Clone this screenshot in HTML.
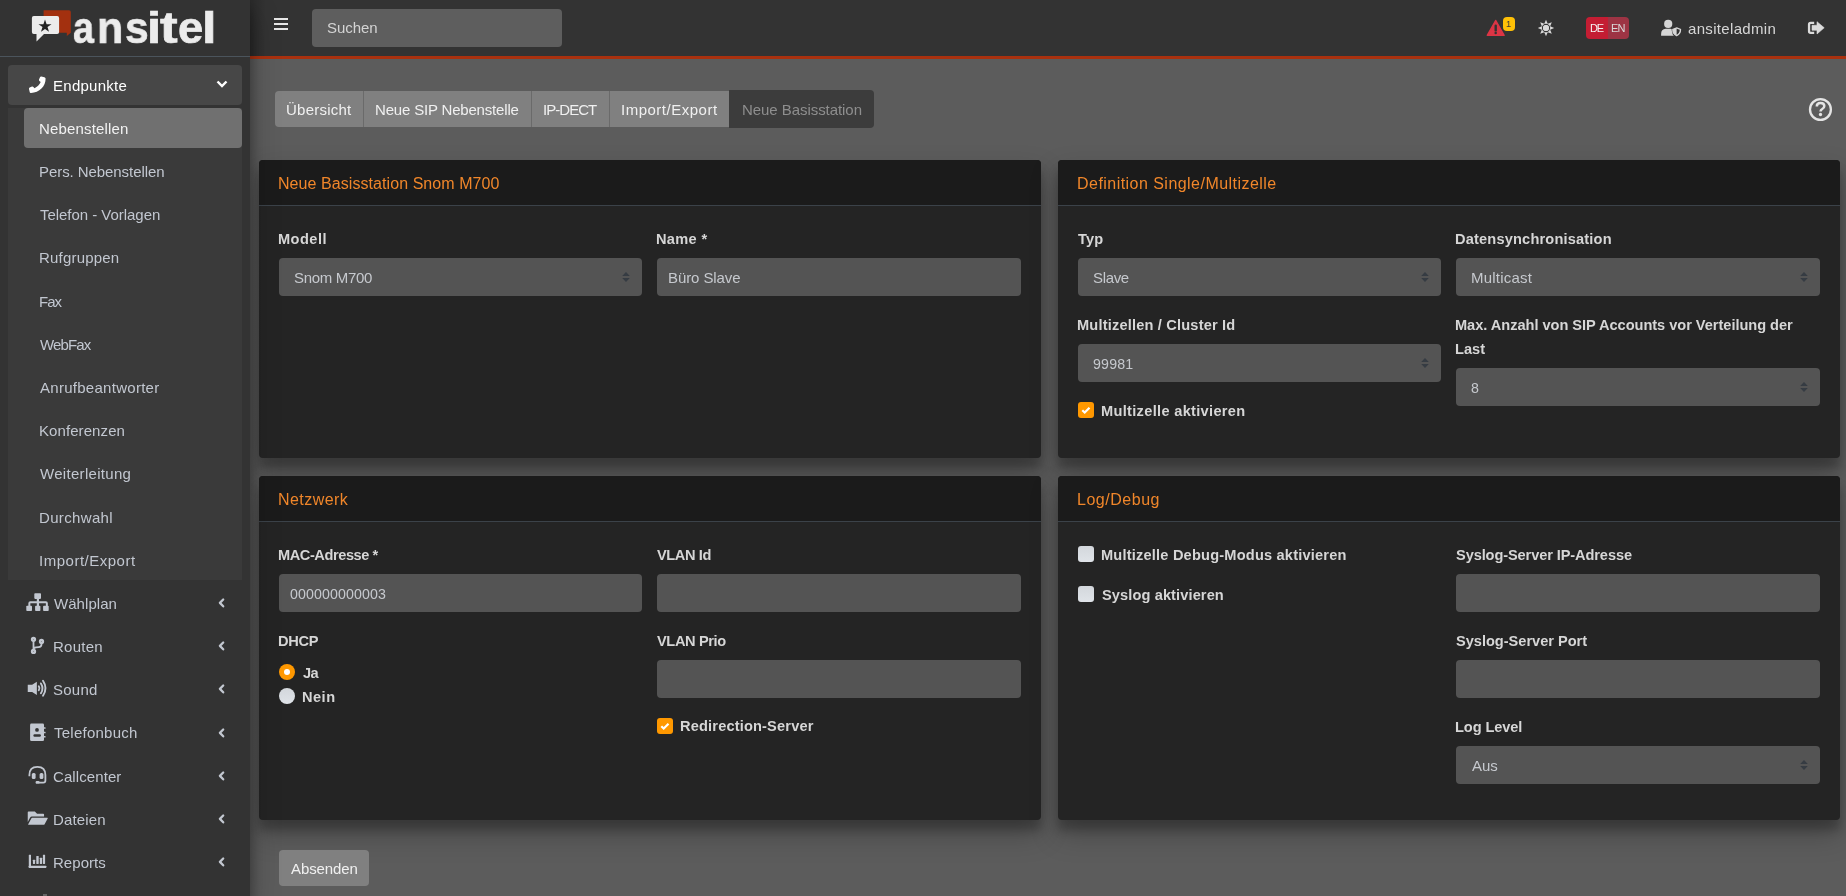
<!DOCTYPE html>
<html><head><meta charset="utf-8">
<style>
*{box-sizing:border-box;margin:0;padding:0}
html,body{width:1846px;height:896px;overflow:hidden;background:#5c5c5c;font-family:"Liberation Sans",sans-serif;position:relative}
.a{position:absolute}
.t{position:absolute;white-space:nowrap;line-height:24px;font-size:15px;will-change:transform}
svg{position:absolute;overflow:visible}
</style></head><body>
<div class="a" style="left:250px;top:59px;width:1596px;height:837px;background:#5c5c5c;"></div>
<div class="a" style="left:275px;top:91px;width:454px;height:36px;background:#808080;border-radius:4px 0 0 4px;"></div>
<div class="a" style="left:363px;top:91px;width:1px;height:36px;background:#6a6a6a;"></div>
<div class="a" style="left:531px;top:91px;width:1px;height:36px;background:#6a6a6a;"></div>
<div class="a" style="left:609px;top:91px;width:1px;height:36px;background:#6a6a6a;"></div>
<div class="a" style="left:729px;top:90px;width:145px;height:38px;background:#3c3c3c;border-radius:0 4px 4px 0;"></div>
<div class="t" style="left:286.00px;top:97.80px;font-size:15px;color:#f0f0f0;letter-spacing:0.238px;">Übersicht</div>
<div class="t" style="left:375.00px;top:97.80px;font-size:15px;color:#f0f0f0;letter-spacing:-0.180px;">Neue SIP Nebenstelle</div>
<div class="t" style="left:543.00px;top:97.80px;font-size:15px;color:#f0f0f0;letter-spacing:-0.958px;">IP-DECT</div>
<div class="t" style="left:621.00px;top:97.80px;font-size:15px;color:#f0f0f0;letter-spacing:0.502px;">Import/Export</div>
<div class="t" style="left:742.00px;top:97.80px;font-size:15px;color:#8e8e8e;letter-spacing:-0.058px;">Neue Basisstation</div>
<svg style="left:1808px;top:97px" width="25" height="25" viewBox="0 0 25 25"><circle cx="12.45" cy="12.5" r="10.45" stroke="#e4e4e4" stroke-width="2.3" fill="none"/><path d="M8.8 9.4q0-3.3 3.7-3.3q3.8 0 3.8 3q0 1.9-2 2.9q-1.8.9-1.8 2.6" stroke="#e4e4e4" stroke-width="2.5" fill="none"/><circle cx="12.5" cy="17.5" r="1.65" fill="#e4e4e4"/></svg>
<div class="a" style="left:259px;top:160px;width:782px;height:298px;background:#242424;border-radius:4px;box-shadow:0 14px 28px rgba(0,0,0,.25),0 10px 10px rgba(0,0,0,.22);"></div>
<div class="a" style="left:259px;top:160px;width:782px;height:45px;background:#1b1b1b;border-radius:4px 4px 0 0;"></div>
<div class="a" style="left:259px;top:205px;width:782px;height:1px;background:#3b4249;"></div>
<div class="t" style="left:278.00px;top:172.46px;font-size:16px;color:#f0862a;letter-spacing:0.068px;">Neue Basisstation Snom M700</div>
<div class="a" style="left:1058px;top:160px;width:782px;height:298px;background:#242424;border-radius:4px;box-shadow:0 14px 28px rgba(0,0,0,.25),0 10px 10px rgba(0,0,0,.22);"></div>
<div class="a" style="left:1058px;top:160px;width:782px;height:45px;background:#1b1b1b;border-radius:4px 4px 0 0;"></div>
<div class="a" style="left:1058px;top:205px;width:782px;height:1px;background:#3b4249;"></div>
<div class="t" style="left:1077.00px;top:172.46px;font-size:16px;color:#f0862a;letter-spacing:0.462px;">Definition Single/Multizelle</div>
<div class="a" style="left:259px;top:476px;width:782px;height:344px;background:#242424;border-radius:4px;box-shadow:0 14px 28px rgba(0,0,0,.25),0 10px 10px rgba(0,0,0,.22);"></div>
<div class="a" style="left:259px;top:476px;width:782px;height:45px;background:#1b1b1b;border-radius:4px 4px 0 0;"></div>
<div class="a" style="left:259px;top:521px;width:782px;height:1px;background:#3b4249;"></div>
<div class="t" style="left:278.00px;top:488.46px;font-size:16px;color:#f0862a;letter-spacing:0.437px;">Netzwerk</div>
<div class="a" style="left:1058px;top:476px;width:782px;height:344px;background:#242424;border-radius:4px;box-shadow:0 14px 28px rgba(0,0,0,.25),0 10px 10px rgba(0,0,0,.22);"></div>
<div class="a" style="left:1058px;top:476px;width:782px;height:45px;background:#1b1b1b;border-radius:4px 4px 0 0;"></div>
<div class="a" style="left:1058px;top:521px;width:782px;height:1px;background:#3b4249;"></div>
<div class="t" style="left:1077.00px;top:488.46px;font-size:16px;color:#f0862a;letter-spacing:0.522px;">Log/Debug</div>
<div class="t" style="left:278.00px;top:226.94px;font-size:14.6px;color:#d6d6d6;font-weight:bold;letter-spacing:0.458px;">Modell</div>
<div class="a" style="left:279px;top:258px;width:363px;height:38px;background:#545454;border-radius:4px;"></div>
<div class="t" style="left:294.00px;top:265.80px;font-size:15px;color:#c6c9ce;letter-spacing:-0.306px;">Snom M700</div>
<svg style="left:622.3px;top:272px" width="8" height="10" viewBox="0 0 8 10"><path d="M4 0L7.8 3.9H0.2zM4 10L7.8 6.1H0.2z" fill="#363c43"/></svg>
<div class="t" style="left:656.00px;top:226.94px;font-size:14.6px;color:#d6d6d6;font-weight:bold;letter-spacing:0.326px;">Name *</div>
<div class="a" style="left:657px;top:258px;width:364px;height:38px;background:#545454;border-radius:4px;"></div>
<div class="t" style="left:668.00px;top:265.80px;font-size:15px;color:#c6c9ce;letter-spacing:-0.086px;">Büro Slave</div>
<div class="t" style="left:1078.00px;top:226.94px;font-size:14.6px;color:#d6d6d6;font-weight:bold;letter-spacing:0.168px;">Typ</div>
<div class="a" style="left:1078px;top:258px;width:363px;height:38px;background:#545454;border-radius:4px;"></div>
<div class="t" style="left:1093.00px;top:265.80px;font-size:15px;color:#c6c9ce;letter-spacing:-0.338px;">Slave</div>
<svg style="left:1421.3px;top:272px" width="8" height="10" viewBox="0 0 8 10"><path d="M4 0L7.8 3.9H0.2zM4 10L7.8 6.1H0.2z" fill="#363c43"/></svg>
<div class="t" style="left:1455.00px;top:226.94px;font-size:14.6px;color:#d6d6d6;font-weight:bold;letter-spacing:0.175px;">Datensynchronisation</div>
<div class="a" style="left:1456px;top:258px;width:364px;height:38px;background:#545454;border-radius:4px;"></div>
<div class="t" style="left:1471.00px;top:265.80px;font-size:15px;color:#c6c9ce;letter-spacing:0.213px;">Multicast</div>
<svg style="left:1800.3px;top:272px" width="8" height="10" viewBox="0 0 8 10"><path d="M4 0L7.8 3.9H0.2zM4 10L7.8 6.1H0.2z" fill="#363c43"/></svg>
<div class="t" style="left:1077.00px;top:312.94px;font-size:14.6px;color:#d6d6d6;font-weight:bold;letter-spacing:0.182px;">Multizellen / Cluster Id</div>
<div class="a" style="left:1078px;top:344px;width:363px;height:38px;background:#545454;border-radius:4px;"></div>
<div class="t" style="left:1093.00px;top:352.08px;font-size:14.2px;color:#c6c9ce;letter-spacing:0.200px;">99981</div>
<svg style="left:1421.3px;top:358px" width="8" height="10" viewBox="0 0 8 10"><path d="M4 0L7.8 3.9H0.2zM4 10L7.8 6.1H0.2z" fill="#363c43"/></svg>
<div class="a" style="left:1078px;top:402px;width:16px;height:16px;background:#ff9800;border-radius:3px;"></div>
<svg style="left:1078px;top:402px" width="16" height="16" viewBox="0 0 16 16"><path d="M4.3 8.2l2.4 2.3 4.8-4.8" stroke="#fff" stroke-width="2.2" fill="none"/></svg>
<div class="t" style="left:1101.00px;top:398.94px;font-size:14.6px;color:#d6d6d6;font-weight:bold;letter-spacing:0.316px;">Multizelle aktivieren</div>
<div class="t" style="left:1455.00px;top:313.44px;font-size:14.6px;color:#d6d6d6;font-weight:bold;letter-spacing:-0.033px;">Max. Anzahl von SIP Accounts vor Verteilung der</div>
<div class="t" style="left:1455.00px;top:337.44px;font-size:14.6px;color:#d6d6d6;font-weight:bold;">Last</div>
<div class="a" style="left:1456px;top:368px;width:364px;height:38px;background:#545454;border-radius:4px;"></div>
<div class="t" style="left:1471.00px;top:376.08px;font-size:14.2px;color:#c6c9ce;">8</div>
<svg style="left:1800.3px;top:382px" width="8" height="10" viewBox="0 0 8 10"><path d="M4 0L7.8 3.9H0.2zM4 10L7.8 6.1H0.2z" fill="#363c43"/></svg>
<div class="t" style="left:278.00px;top:542.94px;font-size:14.6px;color:#d6d6d6;font-weight:bold;letter-spacing:-0.430px;">MAC-Adresse *</div>
<div class="a" style="left:279px;top:574px;width:363px;height:38px;background:#545454;border-radius:4px;"></div>
<div class="t" style="left:290.00px;top:582.08px;font-size:14.2px;color:#c6c9ce;letter-spacing:0.114px;">000000000003</div>
<div class="t" style="left:657.00px;top:542.94px;font-size:14.6px;color:#d6d6d6;font-weight:bold;letter-spacing:-0.395px;">VLAN Id</div>
<div class="a" style="left:657px;top:574px;width:364px;height:38px;background:#545454;border-radius:4px;"></div>
<div class="t" style="left:278.00px;top:628.94px;font-size:14.6px;color:#d6d6d6;font-weight:bold;letter-spacing:-0.310px;">DHCP</div>
<div class="a" style="left:279px;top:664px;width:16px;height:16px;background:#ff9800;border-radius:8px;"></div>
<div class="a" style="left:284px;top:669px;width:6px;height:6px;background:#fff;border-radius:3px;"></div>
<div class="t" style="left:303.00px;top:660.94px;font-size:14.6px;color:#d6d6d6;font-weight:bold;letter-spacing:-0.533px;">Ja</div>
<div class="a" style="left:279px;top:688px;width:16px;height:16px;background:linear-gradient(#d3d7dc,#dfe3e8);border-radius:8px;"></div>
<div class="t" style="left:302.00px;top:684.94px;font-size:14.6px;color:#d6d6d6;font-weight:bold;letter-spacing:0.472px;">Nein</div>
<div class="t" style="left:657.00px;top:628.94px;font-size:14.6px;color:#d6d6d6;font-weight:bold;letter-spacing:-0.368px;">VLAN Prio</div>
<div class="a" style="left:657px;top:660px;width:364px;height:38px;background:#545454;border-radius:4px;"></div>
<div class="a" style="left:657px;top:718px;width:16px;height:16px;background:#ff9800;border-radius:3px;"></div>
<svg style="left:657px;top:718px" width="16" height="16" viewBox="0 0 16 16"><path d="M4.3 8.2l2.4 2.3 4.8-4.8" stroke="#fff" stroke-width="2.2" fill="none"/></svg>
<div class="t" style="left:680.00px;top:714.44px;font-size:14.6px;color:#d6d6d6;font-weight:bold;letter-spacing:0.165px;">Redirection-Server</div>
<div class="a" style="left:1078px;top:546px;width:16px;height:16px;background:linear-gradient(#d3d7dc,#dfe3e8);border-radius:3px;"></div>
<div class="t" style="left:1101.00px;top:542.94px;font-size:14.6px;color:#d6d6d6;font-weight:bold;letter-spacing:0.195px;">Multizelle Debug-Modus aktivieren</div>
<div class="a" style="left:1078px;top:586px;width:16px;height:16px;background:linear-gradient(#d3d7dc,#dfe3e8);border-radius:3px;"></div>
<div class="t" style="left:1102.00px;top:582.94px;font-size:14.6px;color:#d6d6d6;font-weight:bold;letter-spacing:0.108px;">Syslog aktivieren</div>
<div class="t" style="left:1456.00px;top:542.94px;font-size:14.6px;color:#d6d6d6;font-weight:bold;letter-spacing:-0.106px;">Syslog-Server IP-Adresse</div>
<div class="a" style="left:1456px;top:574px;width:364px;height:38px;background:#545454;border-radius:4px;"></div>
<div class="t" style="left:1456.00px;top:628.94px;font-size:14.6px;color:#d6d6d6;font-weight:bold;letter-spacing:-0.019px;">Syslog-Server Port</div>
<div class="a" style="left:1456px;top:660px;width:364px;height:38px;background:#545454;border-radius:4px;"></div>
<div class="t" style="left:1455.00px;top:714.94px;font-size:14.6px;color:#d6d6d6;font-weight:bold;letter-spacing:-0.101px;">Log Level</div>
<div class="a" style="left:1456px;top:746px;width:364px;height:38px;background:#545454;border-radius:4px;"></div>
<div class="t" style="left:1472.00px;top:753.80px;font-size:15px;color:#c6c9ce;">Aus</div>
<svg style="left:1800.3px;top:760px" width="8" height="10" viewBox="0 0 8 10"><path d="M4 0L7.8 3.9H0.2zM4 10L7.8 6.1H0.2z" fill="#363c43"/></svg>
<div class="a" style="left:279px;top:850px;width:90px;height:36px;background:#808080;border-radius:4px;"></div>
<div class="t" style="left:291.00px;top:857.10px;font-size:15px;color:#f0f0f0;letter-spacing:-0.086px;">Absenden</div>
<div class="a" style="left:250px;top:59px;width:14px;height:837px;background:linear-gradient(to right,rgba(0,0,0,.06),rgba(0,0,0,0));"></div>
<div class="a" style="left:250px;top:0px;width:1596px;height:56px;background:#333333;"></div>
<div class="a" style="left:250px;top:0px;width:16px;height:56px;background:linear-gradient(to right,rgba(0,0,0,.2),rgba(0,0,0,0));"></div>
<div class="a" style="left:250px;top:56px;width:1596px;height:3px;background:#a9310f;"></div>
<svg style="left:274px;top:18px" width="14" height="12" viewBox="0 0 14 12"><path d="M0 1h14M0 6h14M0 11h14" stroke="#e6e6e6" stroke-width="2"/></svg>
<div class="a" style="left:312px;top:9px;width:250px;height:38px;background:#5e5e5e;border-radius:4px;"></div>
<div class="t" style="left:327.00px;top:16.40px;font-size:15px;color:#d4d4d4;letter-spacing:-0.040px;">Suchen</div>
<svg style="left:1486px;top:19px" width="20" height="18" viewBox="0 0 20 18"><path d="M9.7 1.5L18.1 16.3H1.3z" fill="#dc3545" stroke="#dc3545" stroke-width="1.5" stroke-linejoin="round"/><path d="M9.7 6.8v4.6" stroke="#333" stroke-width="2.4" stroke-linecap="round"/><circle cx="9.7" cy="14.1" r="1.25" fill="#333"/></svg>
<div class="a" style="left:1503px;top:17px;width:12px;height:14px;background:#ffc107;border-radius:4px;"></div>
<div class="t" style="left:1506.00px;top:11.74px;font-size:9.4px;color:#3a3a3a;">1</div>
<svg style="left:1538px;top:20px" width="16" height="16" viewBox="-8 -8 16 16"><path d="M0.00 -8.20L1.72 -4.16L5.80 -5.80L4.16 -1.72L8.20 0.00L4.16 1.72L5.80 5.80L1.72 4.16L0.00 8.20L-1.72 4.16L-5.80 5.80L-4.16 1.72L-8.20 0.00L-4.16 -1.72L-5.80 -5.80L-1.72 -4.16z" fill="#d9d9d9"/><circle r="3.6" fill="none" stroke="#333" stroke-width="1.1"/><circle r="2.9" fill="#d9d9d9"/></svg>
<div class="a" style="left:1586px;top:17px;width:22px;height:22px;background:#c41d33;border-radius:4px 0 0 4px;"></div>
<div class="a" style="left:1608px;top:17px;width:21px;height:22px;background:#9d3444;border-radius:0 4px 4px 0;"></div>
<div class="t" style="left:1590.00px;top:15.99px;font-size:11px;color:#f4f4f4;letter-spacing:-1.115px;">DE</div>
<div class="t" style="left:1611.00px;top:15.99px;font-size:11px;color:#d9d9d9;letter-spacing:-0.775px;">EN</div>
<svg style="left:1656px;top:14px" width="30" height="26" viewBox="0 0 30 26"><circle cx="12.2" cy="9.9" r="4.1" fill="#d6d6d6"/><path d="M5.1 21.8v-1.6q0-5.2 4.6-5.4h4.5q1.5 0 2.6.6l-.3 4.3q.3 1.3 1.5 2.1z" fill="#d6d6d6"/><path d="M20.65 13.4l4.2 1.7q.2 4.7-4.2 6.6-4.4-1.9-4.2-6.6z" fill="#333" stroke="#333" stroke-width="1.6"/><path d="M20.65 13.9l3.8 1.55q.1 4.3-3.8 6.1-3.9-1.8-3.8-6.1z" fill="none" stroke="#d6d6d6" stroke-width="1.4"/><path d="M20.65 13.9v7.6q-3.9-1.8-3.8-6.1z" fill="#d6d6d6"/></svg>
<div class="t" style="left:1688.00px;top:16.80px;font-size:15px;color:#d6d6d6;letter-spacing:0.332px;">ansiteladmin</div>
<svg style="left:1802px;top:14px" width="28" height="28" viewBox="0 0 28 28"><path d="M12.2 8.85H8.6q-1.55 0-1.55 1.55v6.9q0 1.55 1.55 1.55h3.6" stroke="#dcdcdc" stroke-width="2.3" fill="none"/><path d="M10 11.25h5V7.7l7.2 6.05-7.2 6.25v-3.75h-5z" fill="#dcdcdc" stroke="#dcdcdc" stroke-width=".6" stroke-linejoin="round"/></svg>
<div class="a" style="left:0px;top:0px;width:250px;height:896px;background:#333333;box-shadow:0 14px 28px rgba(0,0,0,.25),0 10px 10px rgba(0,0,0,.22);"></div>
<div class="a" style="left:0px;top:56px;width:250px;height:1px;background:#4b545c;"></div>
<svg style="left:30px;top:8px" width="42" height="36" viewBox="0 0 42 36"><path d="M13.6 2.3h25.4q1.8 0 1.8 1.8v20.6l-4 3.2v-3.2H13.6z" fill="#a3300f"/><path d="M3.8 8h23.4q1.9 0 1.9 1.9v14.2q0 1.9-1.9 1.9H14l-7.5 7.6V26H3.8q-1.9 0-1.9-1.9V9.9q0-1.9 1.9-1.9z" fill="#ececec"/><path d="M15 11.5l1.6 4.7h4.9l-4 2.9 1.5 4.7-4-2.9-4 2.9 1.5-4.7-4-2.9h4.9z" fill="#222"/></svg>
<div class="a" style="left:72.72px;top:0.6px;font-size:44.5px;line-height:54px;font-weight:bold;color:#ececec;-webkit-text-stroke:0.7px #ececec;will-change:transform;transform:scaleX(0.849);transform-origin:0 0">a</div>
<div class="a" style="left:97.08px;top:0.6px;font-size:44.5px;line-height:54px;font-weight:bold;color:#ececec;-webkit-text-stroke:0.7px #ececec;will-change:transform;transform:scaleX(0.962);transform-origin:0 0">n</div>
<div class="a" style="left:124.50px;top:0.6px;font-size:44.5px;line-height:54px;font-weight:bold;color:#ececec;-webkit-text-stroke:0.7px #ececec;will-change:transform;transform:scaleX(0.957);transform-origin:0 0">s</div>
<div class="a" style="left:146.73px;top:0.6px;font-size:44.5px;line-height:54px;font-weight:bold;color:#ececec;-webkit-text-stroke:0.7px #ececec;will-change:transform;transform:scaleX(1.140);transform-origin:0 0">i</div>
<div class="a" style="left:159.80px;top:0.6px;font-size:44.5px;line-height:54px;font-weight:bold;color:#ececec;-webkit-text-stroke:0.7px #ececec;will-change:transform;transform:scaleX(1.192);transform-origin:0 0">t</div>
<div class="a" style="left:178.31px;top:0.6px;font-size:44.5px;line-height:54px;font-weight:bold;color:#ececec;-webkit-text-stroke:0.7px #ececec;will-change:transform;transform:scaleX(1.018);transform-origin:0 0">e</div>
<div class="a" style="left:202.23px;top:0.6px;font-size:44.5px;line-height:54px;font-weight:bold;color:#ececec;-webkit-text-stroke:0.7px #ececec;will-change:transform;transform:scaleX(1.173);transform-origin:0 0">l</div>
<div class="a" style="left:8px;top:65px;width:234px;height:40px;background:#474747;border-radius:4px;"></div>
<svg style="left:28px;top:76px" width="19" height="17" viewBox="0 0 19 17"><path d="M17.6 2.6c-.1-.6-.6-1.1-1.2-1.3L13.3.6c-.6-.1-1.1.2-1.3.7l-1 2.3c-.2.5 0 1.1.4 1.4l1.3 1.1c-1.3 2.7-3.5 4.9-6.2 6.2l-1.1-1.3c-.3-.4-.9-.6-1.4-.4l-2.3 1c-.5.2-.8.8-.7 1.3l.7 3.1c.1.6.7 1 1.3 1C11.3 16.9 17.8 10.3 17.6 2.6z" fill="#fff"/></svg>
<div class="t" style="left:53.00px;top:74.30px;font-size:15px;color:#ffffff;letter-spacing:0.272px;">Endpunkte</div>
<svg style="left:216px;top:80px" width="12" height="8" viewBox="0 0 12 8"><path d="M1.5 1.5L6 6l4.5-4.5" stroke="#fff" stroke-width="2.4" fill="none"/></svg>
<div class="a" style="left:8px;top:108px;width:234px;height:472px;background:#3a3a3a;"></div>
<div class="a" style="left:24px;top:108px;width:218px;height:40px;background:#707070;border-radius:4px;"></div>
<div class="t" style="left:39.00px;top:116.80px;font-size:15px;color:#f2f2f2;letter-spacing:0.168px;">Nebenstellen</div>
<div class="t" style="left:39.00px;top:160.00px;font-size:15px;color:#c2c7d0;letter-spacing:-0.069px;">Pers. Nebenstellen</div>
<div class="t" style="left:40.00px;top:203.20px;font-size:15px;color:#c2c7d0;letter-spacing:-0.037px;">Telefon - Vorlagen</div>
<div class="t" style="left:39.00px;top:246.40px;font-size:15px;color:#c2c7d0;letter-spacing:0.200px;">Rufgruppen</div>
<div class="t" style="left:39.00px;top:289.60px;font-size:15px;color:#c2c7d0;letter-spacing:-1.012px;">Fax</div>
<div class="t" style="left:40.00px;top:332.80px;font-size:15px;color:#c2c7d0;letter-spacing:-0.870px;">WebFax</div>
<div class="t" style="left:40.00px;top:376.00px;font-size:15px;color:#c2c7d0;letter-spacing:0.278px;">Anrufbeantworter</div>
<div class="t" style="left:39.00px;top:419.20px;font-size:15px;color:#c2c7d0;letter-spacing:0.083px;">Konferenzen</div>
<div class="t" style="left:40.00px;top:462.40px;font-size:15px;color:#c2c7d0;letter-spacing:0.302px;">Weiterleitung</div>
<div class="t" style="left:39.00px;top:505.60px;font-size:15px;color:#c2c7d0;letter-spacing:0.347px;">Durchwahl</div>
<div class="t" style="left:39.00px;top:548.80px;font-size:15px;color:#c2c7d0;letter-spacing:0.510px;">Import/Export</div>
<div class="t" style="left:54.00px;top:591.80px;font-size:15px;color:#c2c7d0;letter-spacing:0.057px;">Wählplan</div>
<svg style="left:208px;top:590.0px" width="28" height="28" viewBox="0 0 28 28"><path d="M15.2 9.5L11.9 12.9L15.2 16.3" stroke="#c2c7d0" stroke-width="2.3" stroke-linecap="round" stroke-linejoin="round" fill="none"/></svg>
<div class="t" style="left:53.00px;top:635.00px;font-size:15px;color:#c2c7d0;letter-spacing:0.240px;">Routen</div>
<svg style="left:208px;top:633.2px" width="28" height="28" viewBox="0 0 28 28"><path d="M15.2 9.5L11.9 12.9L15.2 16.3" stroke="#c2c7d0" stroke-width="2.3" stroke-linecap="round" stroke-linejoin="round" fill="none"/></svg>
<div class="t" style="left:53.00px;top:678.20px;font-size:15px;color:#c2c7d0;letter-spacing:0.250px;">Sound</div>
<svg style="left:208px;top:676.4px" width="28" height="28" viewBox="0 0 28 28"><path d="M15.2 9.5L11.9 12.9L15.2 16.3" stroke="#c2c7d0" stroke-width="2.3" stroke-linecap="round" stroke-linejoin="round" fill="none"/></svg>
<div class="t" style="left:54.00px;top:721.40px;font-size:15px;color:#c2c7d0;letter-spacing:0.243px;">Telefonbuch</div>
<svg style="left:208px;top:719.6px" width="28" height="28" viewBox="0 0 28 28"><path d="M15.2 9.5L11.9 12.9L15.2 16.3" stroke="#c2c7d0" stroke-width="2.3" stroke-linecap="round" stroke-linejoin="round" fill="none"/></svg>
<div class="t" style="left:53.00px;top:764.60px;font-size:15px;color:#c2c7d0;letter-spacing:0.086px;">Callcenter</div>
<svg style="left:208px;top:762.8px" width="28" height="28" viewBox="0 0 28 28"><path d="M15.2 9.5L11.9 12.9L15.2 16.3" stroke="#c2c7d0" stroke-width="2.3" stroke-linecap="round" stroke-linejoin="round" fill="none"/></svg>
<div class="t" style="left:53.00px;top:807.80px;font-size:15px;color:#c2c7d0;letter-spacing:0.167px;">Dateien</div>
<svg style="left:208px;top:806.0px" width="28" height="28" viewBox="0 0 28 28"><path d="M15.2 9.5L11.9 12.9L15.2 16.3" stroke="#c2c7d0" stroke-width="2.3" stroke-linecap="round" stroke-linejoin="round" fill="none"/></svg>
<div class="t" style="left:53.00px;top:851.00px;font-size:15px;color:#c2c7d0;letter-spacing:0.038px;">Reports</div>
<svg style="left:208px;top:849.2px" width="28" height="28" viewBox="0 0 28 28"><path d="M15.2 9.5L11.9 12.9L15.2 16.3" stroke="#c2c7d0" stroke-width="2.3" stroke-linecap="round" stroke-linejoin="round" fill="none"/></svg>
<svg style="left:24px;top:588px" width="28" height="28" viewBox="0 0 28 28"><g fill="#c2c7d0"><rect x="10.3" y="5.3" width="6.7" height="5.6" rx="0.8"/><rect x="2.3" y="17.8" width="5.7" height="5.3" rx="0.8"/><rect x="11.1" y="17.8" width="5.3" height="5.3" rx="0.8"/><rect x="19.1" y="17.8" width="5.6" height="5.3" rx="0.8"/><rect x="12.8" y="10.5" width="2.2" height="7.5"/></g><path d="M5.35 18V15.2q0-1 1-1h15.5q1 0 1 1V18" stroke="#c2c7d0" stroke-width="2" fill="none"/></svg>
<svg style="left:24px;top:632px" width="28" height="28" viewBox="0 0 28 28"><g stroke="#c2c7d0" fill="none"><circle cx="9.5" cy="7.3" r="1.5" stroke-width="2.3"/><circle cx="17.5" cy="9.4" r="1.5" stroke-width="2.3"/><circle cx="9.5" cy="19.4" r="1.5" stroke-width="2.3"/><path d="M9.5 9v8.6M17.5 11.1v1.2q0 2.7-3 2.9l-2.5.2q-2.5.2-2.5 2.2" stroke-width="1.8"/></g></svg>
<svg style="left:24px;top:675px" width="28" height="28" viewBox="0 0 28 28"><path d="M3.75 9.7h4.4l4.7-3v13.3l-4.7-3H3.75z" fill="#c2c7d0"/><g stroke="#c2c7d0" fill="none" stroke-width="1.9" stroke-linecap="round"><path d="M14.8 11.3q1.4 2-0 4"/><path d="M16.9 8.4q3.2 4.9 0 9.8"/><path d="M19 5.8q5 7.5 0 15"/></g></svg>
<svg style="left:24px;top:718px" width="28" height="28" viewBox="0 0 28 28"><rect x="6.1" y="5.6" width="13.9" height="17.4" rx="1.3" fill="#c2c7d0"/><g fill="#c2c7d0"><rect x="19.5" y="9.3" width="2.1" height="1.4" rx=".5"/><rect x="19.5" y="13.8" width="2.1" height="1.4" rx=".5"/><rect x="19.5" y="18.1" width="2.1" height="1.4" rx=".5"/></g><circle cx="13" cy="11.9" r="1.9" fill="#333"/><rect x="9.4" y="16.3" width="7.5" height="2.4" rx="1.2" fill="#333"/></svg>
<svg style="left:24px;top:761px" width="28" height="28" viewBox="0 0 28 28"><path d="M5.4 15.3V14q0-8.1 8-8.1t8 8.1v5.6q0 2.1-2.1 2.1h-7.2" stroke="#c2c7d0" stroke-width="1.8" fill="none"/><rect x="7.8" y="11.9" width="3.8" height="6.2" rx="1.5" fill="#c2c7d0"/><rect x="15.6" y="11.9" width="3.8" height="6.2" rx="1.5" fill="#c2c7d0"/><rect x="11.6" y="20" width="4" height="2.6" rx="1.2" fill="#c2c7d0"/></svg>
<svg style="left:24px;top:804px" width="28" height="28" viewBox="0 0 28 28"><path d="M3.75 8.3q0-.8.8-.8h6.3l2.2 2.2h6.2q.8 0 .8.8v2.1H8q-1.3 0-2 1.2l-2.25 4.3z" fill="#c2c7d0"/><path d="M8.1 13.75h15.2q.7 0 .4.7l-3.1 5.8q-.3.6-1 .6H4.6q-.7 0-.4-.6l3.1-5.8q.3-.7.8-.7z" fill="#c2c7d0"/></svg>
<svg style="left:24px;top:847px" width="28" height="28" viewBox="0 0 28 28"><g fill="#c2c7d0"><rect x="4.8" y="7.7" width="2.2" height="13.2" rx=".4"/><rect x="4.8" y="18.75" width="17.5" height="2.15" rx=".4"/><rect x="8.9" y="12.8" width="2.2" height="4.1" rx=".4"/><rect x="12.3" y="9.1" width="2.4" height="7.8" rx=".4"/><rect x="15.8" y="10.8" width="2.3" height="6.1" rx=".4"/><rect x="18.9" y="7.7" width="2.2" height="9.2" rx=".4"/></g></svg>
<div class="a" style="left:42.5px;top:894px;width:2px;height:2px;background:#777;border-radius:1px;"></div>
<div class="a" style="left:45px;top:894px;width:2px;height:2px;background:#777;border-radius:1px;"></div>
</body></html>
